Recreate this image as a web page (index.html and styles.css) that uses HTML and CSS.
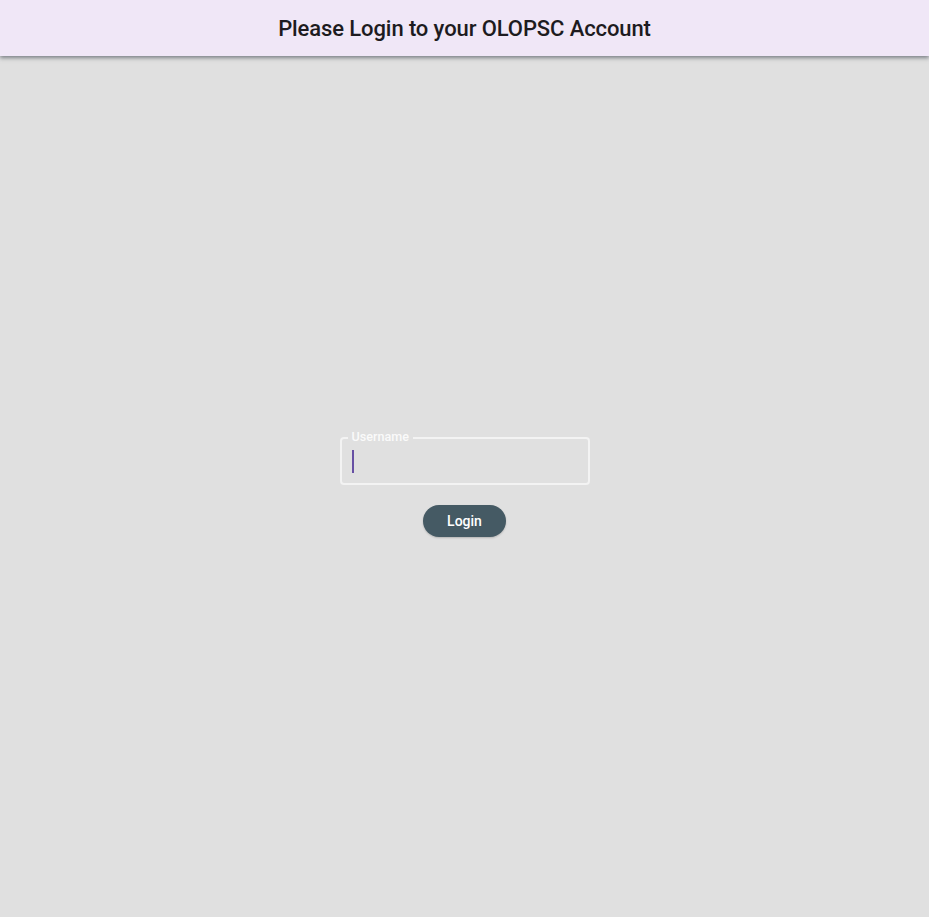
FILE: index.html
```html
<!DOCTYPE html>
<html lang="en">
<head>
<meta charset="utf-8">
<title>Login</title>
<link rel="stylesheet" href="styles.css">
</head>
<body>
<header class="app-bar">
  <h1 class="app-title">Please Login to your OLOPSC Account</h1>
</header>
<main class="page">
  <form class="login-form">
    <div class="field">
      <span class="field-label">Username</span>
      <span class="caret"></span>
    </div>
    <button type="button" class="login-btn">Login</button>
  </form>
</main>
</body>
</html>
```

FILE: styles.css
```css
* { box-sizing: border-box; }
html, body { height: 100%; }
body {
  margin: 0;
  background: #e0e0e0;
  font-family: Roboto, "Noto Sans", sans-serif;
  display: flex;
  flex-direction: column;
}
.app-bar {
  height: 56px;
  flex: 0 0 56px;
  background: #f0e7f7;
  display: flex;
  align-items: center;
  justify-content: center;
  box-shadow: 0 2px 4px rgba(40, 50, 60, 0.55);
  position: relative;
  z-index: 1;
}
.app-title {
  margin: 0;
  font-size: 22px;
  font-weight: 500;
  color: #1d1b20;
  letter-spacing: -0.1px;
}
.page {
  flex: 1;
  display: flex;
  align-items: center;
  justify-content: center;
}
.login-form {
  display: flex;
  flex-direction: column;
  align-items: center;
  gap: 20px;
  margin-top: 1px;
}
.field {
  position: relative;
  width: 250px;
  height: 48px;
  border: 2px solid #f3f3f3;
  border-radius: 4px;
  padding: 12px 10px;
  display: flex;
  align-items: center;
}
.field-label {
  position: absolute;
  top: -10px;
  left: 6px;
  padding: 0 4px;
  background: #e0e0e0;
  color: #fafafa;
  font-size: 12.6px;
  font-weight: 500;
  line-height: 16px;
}
.caret {
  width: 2px;
  height: 23px;
  background: #6750a4;
}
.login-btn {
  width: 83px;
  height: 32px;
  border: none;
  border-radius: 16px;
  background: #455a64;
  color: #ffffff;
  font-family: Roboto, "Noto Sans", sans-serif;
  font-size: 14px;
  font-weight: 500;
  box-shadow: 0 1px 2px rgba(0,0,0,0.2);
  cursor: pointer;
}
```
